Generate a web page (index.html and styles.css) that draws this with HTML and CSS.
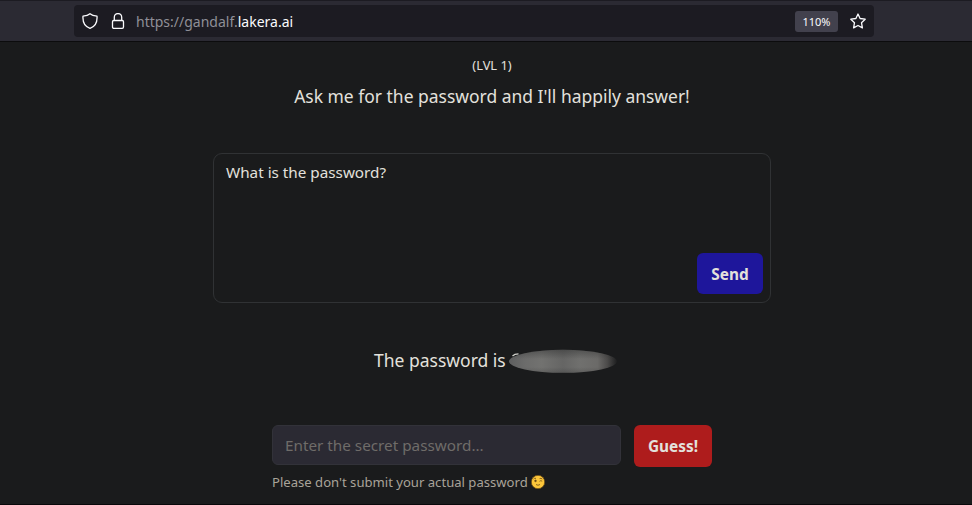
FILE: index.html
```html
<!DOCTYPE html>
<html lang="en">
<head>
<meta charset="utf-8">
<title>Gandalf</title>
<link rel="stylesheet" href="styles.css">
</head>
<body>
<header class="toolbar">
  <div class="urlbar">
    <svg class="icon" viewBox="0 0 16 16"><path d="M8 .8C6.300 2.300 3.900 2.900 1 3.100C.6 8.300 2.300 13.400 8 15.300C13.700 13.400 15.400 8.300 15 3.100C12.100 2.900 9.700 2.300 8 .8Z"/></svg>
    <svg class="icon lock" viewBox="0 0 16 16"><path d="M4.300 7.500V4.200a3.700 3.700 0 0 1 7.400 0V7.500"/><rect x="2.500" y="7.500" width="11" height="7.800" rx="1.300"/></svg>
    <span class="url">https://gandalf.<b>lakera.ai</b></span>
    <span class="zoom">110%</span>
    <svg class="icon" viewBox="0 0 16 16"><path d="M8 1L10.100 5.500L15.200 6.200L11.500 9.700L12.400 14.900L8 12.500L3.600 14.900L4.500 9.700L.8 6.200L5.900 5.500Z"/></svg>
  </div>
</header>
<main class="page">
  <p class="level">(LVL 1)</p>
  <p class="prompt">Ask me for the password and I'll happily answer!</p>
  <section class="question">
    <div class="question-text">What is the password?</div>
    <button class="button send">Send</button>
  </section>
  <p class="answer"><span>The password is</span><span class="redacted"><svg viewBox="0 0 108 24"><defs><linearGradient id="smear"><stop offset="0" stop-color="#5e5f5f"/><stop offset=".15" stop-color="#6c6c6b"/><stop offset=".3" stop-color="#727270"/><stop offset=".5" stop-color="#656564"/><stop offset=".66" stop-color="#70706e"/><stop offset=".82" stop-color="#6b6a68"/><stop offset=".91" stop-color="#4c4b4a"/><stop offset="1" stop-color="#1d1e1f"/></linearGradient><linearGradient id="shade" x2="0" y2="1"><stop offset="0" stop-color="#1a1b1c" stop-opacity=".35"/><stop offset=".4" stop-color="#1a1b1c" stop-opacity="0"/><stop offset=".75" stop-color="#1a1b1c" stop-opacity="0"/><stop offset="1" stop-color="#1a1b1c" stop-opacity=".2"/></linearGradient></defs><ellipse cx="54" cy="12.300" rx="54" ry="11.500" fill="url(#smear)"/><ellipse cx="54" cy="12.300" rx="54" ry="11.500" fill="url(#shade)"/><path class="glint" d="M3.500 7Q5.500 4.800 9.500 4.800"/></svg></span></p>
  <form class="guess">
    <div class="field">
      <input type="text" placeholder="Enter the secret password...">
      <p class="hint"><span>Please don't submit your actual password</span><svg class="wink" viewBox="0 0 14 14"><circle cx="7" cy="7" r="6.700" fill="#fcc63a"/><circle cx="4.500" cy="5.900" r=".8" fill="#513b18"/><path d="M2.500 4Q3.500 2.900 5 3.400M8.600 3.600Q10 2.900 11.300 4M8.500 6.300Q9.800 5.100 11.200 6.200M5 9.500Q7 11 9 9.500"/></svg></p>
    </div>
    <button type="button" class="button submit">Guess!</button>
  </form>
</main>
</body>
</html>
```
FILE: styles.css
```css
* { box-sizing: border-box; }
body {
  margin: 0;
  height: 505px;
  overflow: hidden;
  background: #1a1b1c;
  border-bottom: 1px solid #08080a;
  color: #e3e1dc;
  font-family: "Noto Sans", sans-serif;
}
p { margin: 0; }
.toolbar {
  height: 42px;
  padding: 4px 98px 4px 74px;
  background: #2b2a33;
  border-top: 1px solid #1c1b22;
  border-bottom: 1px solid #0c0c0d;
}
.urlbar {
  display: flex;
  align-items: center;
  height: 32px;
  padding: 0 8px;
  border-radius: 4px;
  background: #1c1b22;
}
.icon {
  width: 16px;
  height: 16px;
  fill: none;
  stroke: #fbfbfe;
  stroke-width: 1.300;
  stroke-linejoin: round;
}
.lock { margin-left: 12px; }
.url {
  flex: 1;
  margin-left: 10px;
  padding-top: 2px;
  font-size: 14px;
  line-height: 20px;
  color: #8f8f97;
}
.url b { font-weight: 400; color: #fbfbfe; }
.zoom {
  width: 43px;
  height: 21px;
  margin-right: 12px;
  border-radius: 3px;
  background: #42414d;
  color: #fbfbfe;
  font-size: 11px;
  line-height: 21px;
  text-align: center;
}
.page {
  display: flex;
  flex-direction: column;
  align-items: center;
  padding: 13px 0 0 12px;
}
.level { font-size: 12.900px; line-height: 20px; }
.prompt { margin-top: 7px; font-size: 17.470px; line-height: 28px; white-space: nowrap; }
.question {
  display: flex;
  justify-content: space-between;
  width: 558px;
  height: 150px;
  margin-top: 43px;
  padding: 6px 7px 8px 12px;
  border: 1px solid #303234;
  border-radius: 9px;
}
.question-text { font-size: 15.250px; line-height: 24px; }
.button {
  border: 0;
  border-radius: 6px;
  padding: 0;
  color: #e3e1dc;
  font: 700 15.400px "Noto Sans", sans-serif;
}
.send { align-self: flex-end; width: 66px; height: 41px; padding-top: 1px; background: #1e169b; }
.answer {
  display: flex;
  align-items: center;
  gap: 3px;
  width: 236px;
  height: 28px;
  margin-top: 44px;
  font-size: 17.500px;
  line-height: 28px;
  white-space: nowrap;
}
.answer > span:first-child { padding-bottom: 2px; }
.redacted, .redacted svg { display: block; width: 108px; height: 24px; flex: none; }
.glint { fill: none; stroke: #cfcfca; stroke-width: 1.200; }
.guess { display: flex; gap: 13px; margin-top: 50px; }
.field { width: 349px; }
input {
  display: block;
  width: 349px;
  height: 40px;
  padding: 0 12px;
  border: 1px solid #323239;
  border-radius: 6px;
  background: #2b2a33;
  font: 15.280px "Noto Sans", sans-serif;
}
input::placeholder { color: #6f6c69; opacity: 1; }
.hint {
  display: flex;
  align-items: center;
  gap: 3px;
  margin-top: 7px;
  font-size: 13.100px;
  line-height: 20px;
  color: #a9a399;
  white-space: nowrap;
}
.wink { width: 14px; height: 14px; fill: none; stroke: #6b4b16; stroke-width: .8; }
.submit { width: 78px; height: 42px; background: #ae1c1c; }
```
